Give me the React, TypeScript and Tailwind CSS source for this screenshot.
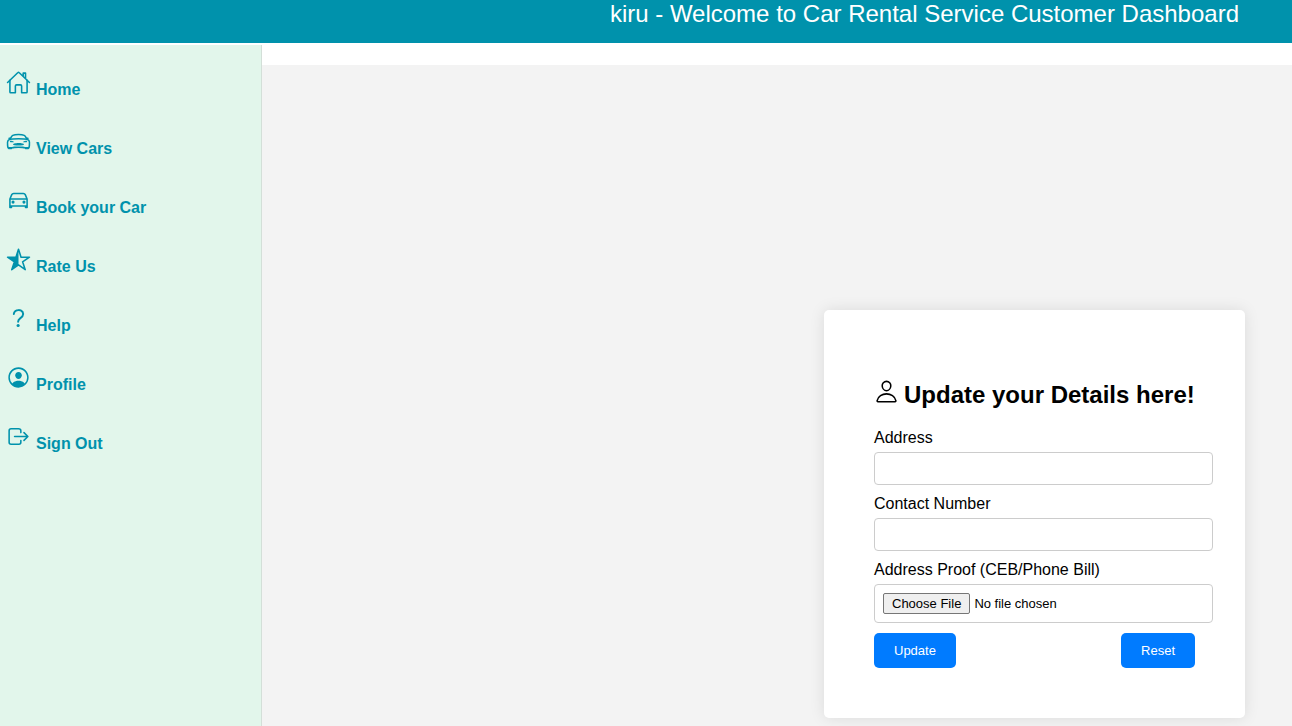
import type { IconType } from "react-icons";
import {
  IoCarOutline,
  IoCarSportOutline,
  IoHelp,
  IoHomeOutline,
  IoLogOutOutline,
  IoPersonCircleOutline,
  IoPersonOutline,
  IoStarHalfOutline,
} from "react-icons/io5";

const links: { label: string; Icon: IconType }[] = [
  { label: "Home", Icon: IoHomeOutline },
  { label: "View Cars", Icon: IoCarSportOutline },
  { label: "Book your Car", Icon: IoCarOutline },
  { label: "Rate Us", Icon: IoStarHalfOutline },
  { label: "Help", Icon: IoHelp },
  { label: "Profile", Icon: IoPersonCircleOutline },
  { label: "Sign Out", Icon: IoLogOutOutline },
];

const fieldClass = "block w-full rounded border border-[#cccccc] bg-white px-2 text-[13px] text-black";
const labelClass = "mb-1 block text-base leading-5";
const buttonClass = "h-[35px] rounded-[5px] bg-[#007bff] px-5 text-[13px] text-white";

export default function App() {
  return (
    <div className="flex min-h-screen flex-col bg-white font-['Liberation_Sans',Arial,sans-serif] text-black">
      <header className="flex h-[43px] items-start justify-end bg-[#0092ac] pr-[53px]">
        <h1 className="text-2xl leading-7 text-white">kiru - Welcome to Car Rental Service Customer Dashboard</h1>
      </header>

      <div className="flex flex-1">
        <aside className="mt-0.5 w-[262px] shrink-0 border-r border-[#d3dfd8] bg-[#e2f6eb] pt-[25px]">
          <nav className="flex flex-col gap-[19px] pl-[6px]">
            {links.map(({ label, Icon }) => (
              <a key={label} href="#" className="flex items-start gap-[5px] text-base font-bold leading-10 text-[#0092ac]">
                <Icon size={25} aria-hidden="true" />
                {label}
              </a>
            ))}
          </nav>
        </aside>

        <main className="mt-[22px] flex flex-1 items-start justify-end bg-[#f3f3f3] pt-[245px] pr-[47px] pb-2">
          <form
            onSubmit={(e) => e.preventDefault()}
            className="w-[421px] rounded-[5px] bg-white pt-[69px] pr-8 pb-[50px] pl-[50px] shadow-[0_0_15px_rgba(0,0,0,0.1)]"
          >
            <h2 className="mb-[17px] flex items-start gap-[5px] whitespace-nowrap text-2xl font-bold leading-8">
              <IoPersonOutline size={25} className="shrink-0" aria-hidden="true" />
              Update your Details here!
            </h2>

            <div className="flex flex-col gap-[9px]">
              <div>
                <label htmlFor="address" className={labelClass}>Address</label>
                <input id="address" type="text" className={`${fieldClass} h-[33px]`} />
              </div>
              <div>
                <label htmlFor="contact" className={labelClass}>Contact Number</label>
                <input id="contact" type="text" className={`${fieldClass} h-[33px]`} />
              </div>
              <div>
                <label htmlFor="proof" className={labelClass}>Address Proof (CEB/Phone Bill)</label>
                <input
                  id="proof"
                  type="file"
                  className={`${fieldClass} h-[39px] py-2 file:mr-1 file:h-[21px] file:rounded-[2px] file:border file:border-solid file:border-[#767676] file:bg-[#efefef] file:px-2 file:text-[13px] file:text-black`}
                />
              </div>
            </div>

            <div className="mt-2.5 flex justify-between pr-[18px]">
              <button type="submit" className={buttonClass}>Update</button>
              <button type="reset" className={buttonClass}>Reset</button>
            </div>
          </form>
        </main>
      </div>
    </div>
  );
}
